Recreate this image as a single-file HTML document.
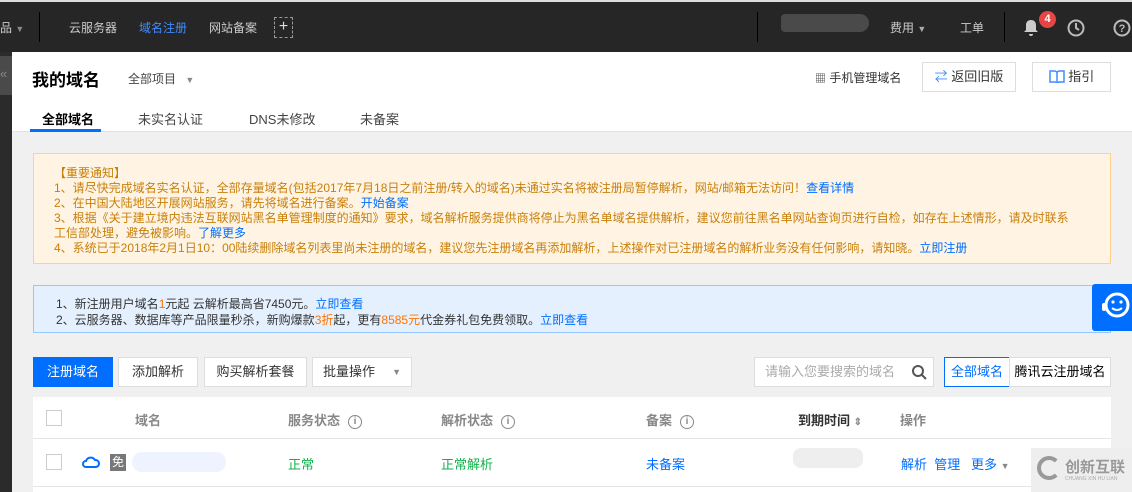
<!DOCTYPE html>
<html><head><meta charset="utf-8"><style>
*{margin:0;padding:0;box-sizing:border-box}
body{width:1132px;height:492px;overflow:hidden;background:#f0f0f0;font-family:"Liberation Sans","Noto Sans CJK SC",sans-serif;font-size:12px;color:#333;position:relative}
.a{position:absolute}
.top{left:0;top:0;width:1132px;height:52px;background:#262626;border-top:2px solid #ddd}
.top>span{position:absolute;font-size:12px;color:#ccc;top:17px}
.side{left:0;top:52px;width:12px;height:440px;background:#2b2b2b}
.hdr{left:12px;top:52px;width:1120px;height:80px;background:#fff;border-bottom:1px solid #e2e2e2}
.btn{position:absolute;background:#fff;border:1px solid #ddd;height:30px;line-height:28px;text-align:center;font-size:13px;color:#333}
.notice{left:33px;top:153px;width:1078px;height:111px;background:#fff4e3;border:1px solid #ffd18b;color:#c87f0a;font-size:12px;line-height:15px;padding:12px 0 0 20px}
.blue{color:#006eff}
.promo{left:33px;top:285px;width:1078px;height:48px;background:#e5f0ff;border:1px solid #97c7ff;color:#333;line-height:16px;padding:10px 0 0 22px}
.or{color:#ff7200}
.tbl{left:33px;top:397px;width:1078px;height:95px;background:#fff}
.th{position:absolute;top:13px;font-size:13px;color:#888;font-weight:bold}
.td{position:absolute;top:57px;font-size:13px}
.cb{position:absolute;width:16px;height:16px;border:1px solid #ccc;left:13px;background:#fff}
.i{display:inline-block;width:14px;height:14px;border:1.5px solid #888;border-radius:50%;font-size:10px;line-height:11px;text-align:center;color:#888;margin-left:8px;vertical-align:1px;font-weight:bold}
</style></head><body>
<div class="a top">
<span style="left:0">品 <small style="font-size:9px;color:#888">▼</small></span>
<div class="a" style="left:39px;top:10px;width:1px;height:30px;background:#000"></div>
<span style="left:69px">云服务器</span>
<span style="left:139px;color:#3f8cff">域名注册</span>
<span style="left:209px">网站备案</span>
<div class="a" style="left:274px;top:15px;width:19px;height:21px;border:1px dashed #999;color:#ddd;font-size:16px;line-height:17px;text-align:center">+</div>
<div class="a" style="left:757px;top:10px;width:1px;height:30px;background:#000"></div>
<div class="a" style="left:781px;top:12px;width:88px;height:18px;background:#4a4a4a;border-radius:4px 9px 9px 4px"></div>
<span style="left:890px">费用 <small style="font-size:9px;color:#aaa">▼</small></span>
<span style="left:960px">工单</span>
<div class="a" style="left:1004px;top:10px;width:1px;height:30px;background:#000"></div>
<svg class="a" style="left:1023px;top:17px" width="16" height="18" viewBox="0 0 16 18"><path d="M8 1c-3 0-5 2-5 5v5l-2 2h14l-2-2V6c0-3-2-5-5-5z M6 15a2 2 0 004 0z" fill="#ccc"/></svg>
<div class="a" style="left:1039px;top:9px;width:17px;height:17px;border-radius:50%;background:#e54545;color:#fff;font-size:11px;font-weight:bold;text-align:center;line-height:17px">4</div>
<svg class="a" style="left:1067px;top:17px" width="18" height="18" viewBox="0 0 18 18"><circle cx="9" cy="9" r="7.5" fill="none" stroke="#bbb" stroke-width="2"/><path d="M9 4v5l3 2" fill="none" stroke="#bbb" stroke-width="2"/></svg>
<svg class="a" style="left:1113px;top:17px" width="18" height="18" viewBox="0 0 18 18"><circle cx="9" cy="9" r="7.5" fill="none" stroke="#bbb" stroke-width="2"/><text x="9" y="13" font-size="11" font-weight="bold" text-anchor="middle" fill="#bbb" font-family="Liberation Sans">?</text></svg>
</div>
<div class="a side"><div class="a" style="left:0;top:4px;width:12px;height:39px;background:#4a4a4a;color:#888;font-size:13px;line-height:36px">«</div></div>
<div class="a hdr">
<div class="a" style="left:20px;top:14px;font-size:17px;font-weight:bold;color:#000">我的域名</div>
<div class="a" style="left:116px;top:18px;font-size:12px;color:#444">全部项目 <span style="font-size:9px;color:#888;margin-left:6px">▼</span></div>
<div class="a" style="left:803px;top:17px;font-size:12px;color:#333"><span style="font-size:11px">▦</span> 手机管理域名</div>
<div class="btn" style="left:910px;top:10px;width:94px;height:30px"><span style="color:#3f8cff">⇄</span> 返回旧版</div>
<div class="btn" style="left:1020px;top:10px;width:79px;height:30px"><svg width="16" height="14" viewBox="0 0 16 14" style="vertical-align:-2px"><path d="M1 2h5l2 1 2-1h5v11h-5l-2 1-2-1H1z M8 3v10" fill="none" stroke="#3f8cff" stroke-width="1.5"/></svg> 指引</div>
<div class="a" style="left:30px;top:57px;font-size:13px;font-weight:bold;color:#000">全部域名</div>
<div class="a" style="left:18px;top:77px;width:71px;height:3px;background:#006eff"></div>
<div class="a" style="left:126px;top:57px;font-size:13px;color:#444">未实名认证</div>
<div class="a" style="left:237px;top:57px;font-size:13px;color:#444">DNS未修改</div>
<div class="a" style="left:348px;top:57px;font-size:13px;color:#444">未备案</div>
</div>
<div class="a notice">【重要通知】<br>
1、请尽快完成域名实名认证，全部存量域名(包括2017年7月18日之前注册/转入的域名)未通过实名将被注册局暂停解析，网站/邮箱无法访问！<span class="blue">查看详情</span><br>
2、在中国大陆地区开展网站服务，请先将域名进行备案。<span class="blue">开始备案</span><br>
3、根据《关于建立境内违法互联网站黑名单管理制度的通知》要求，域名解析服务提供商将停止为黑名单域名提供解析，建议您前往黑名单网站查询页进行自检，如存在上述情形，请及时联系<br>工信部处理，避免被影响。<span class="blue">了解更多</span><br>
4、系统已于2018年2月1日10：00陆续删除域名列表里尚未注册的域名，建议您先注册域名再添加解析，上述操作对已注册域名的解析业务没有任何影响，请知晓。<span class="blue">立即注册</span></div>
<div class="a promo">1、新注册用户域名<span class="or">1</span>元起 云解析最高省7450元。<span class="blue">立即查看</span><br>
2、云服务器、数据库等产品限量秒杀，新购爆款<span class="or">3折</span>起，更有<span class="or">8585元</span>代金券礼包免费领取。<span class="blue">立即查看</span></div>
<div class="a" style="left:1092px;top:284px;width:40px;height:47px;background:#006eff;border-radius:3px 0 0 3px">
<svg width="40" height="47" viewBox="0 0 40 47"><circle cx="25" cy="21" r="11" fill="none" stroke="#fff" stroke-width="3"/><circle cx="21" cy="18" r="1.6" fill="#fff"/><circle cx="29" cy="18" r="1.6" fill="#fff"/><path d="M20 24q5 4 10 0" fill="none" stroke="#fff" stroke-width="2"/><rect x="10" y="19" width="4" height="8" rx="2" fill="#fff"/></svg></div>
<div class="btn" style="left:33px;top:357px;width:80px;background:#006eff;border-color:#006eff;color:#fff">注册域名</div>
<div class="btn" style="left:118px;top:357px;width:80px">添加解析</div>
<div class="btn" style="left:204px;top:357px;width:103px">购买解析套餐</div>
<div class="btn" style="left:312px;top:357px;width:100px;text-align:left;padding-left:10px">批量操作 <span style="position:absolute;right:10px;font-size:9px;color:#888">▼</span></div>
<div class="btn" style="left:754px;top:357px;width:180px;text-align:left;padding-left:10px;color:#aaa">请输入您要搜索的域名
<svg class="a" style="right:6px;top:6px" width="16" height="16" viewBox="0 0 16 16"><circle cx="7" cy="7" r="5" fill="none" stroke="#555" stroke-width="2"/><path d="M11 11l4 4" stroke="#555" stroke-width="2"/></svg></div>
<div class="btn" style="left:944px;top:357px;width:66px;border-color:#006eff;color:#006eff">全部域名</div>
<div class="btn" style="left:1009px;top:357px;width:102px;color:#000">腾讯云注册域名</div>
<div class="a tbl">
<div class="a" style="left:0;top:41px;width:1078px;height:1px;background:#e5e5e5"></div>
<div class="a" style="left:0;top:89px;width:1078px;height:1px;background:#e5e5e5"></div>
<div class="cb" style="top:13px"></div>
<div class="th" style="left:102px">域名</div>
<div class="th" style="left:255px">服务状态<span class="i">i</span></div>
<div class="th" style="left:408px">解析状态<span class="i">i</span></div>
<div class="th" style="left:613px">备案<span class="i">i</span></div>
<div class="th" style="left:765px;color:#333">到期时间 <span style="font-size:10px;color:#888">⇕</span></div>
<div class="th" style="left:867px">操作</div>
<div class="cb" style="top:57px"></div>
<svg class="a" style="left:49px;top:58px" width="18" height="14" viewBox="0 0 18 14"><path d="M4 12a3 3 0 010-6 5 5 0 019-1 3.5 3.5 0 011 7z" fill="none" stroke="#006eff" stroke-width="2"/></svg>
<div class="a" style="left:77px;top:57px;width:16px;height:17px;background:#777;color:#fff;font-size:12px;text-align:center;line-height:17px">免</div>
<div class="a" style="left:99px;top:55px;width:94px;height:20px;background:#eef3ff;border-radius:10px"></div>
<div class="td" style="left:255px;color:#12b14b">正常</div>
<div class="td" style="left:408px;color:#12b14b">正常解析</div>
<div class="td" style="left:613px;color:#006eff">未备案</div>
<div class="a" style="left:760px;top:51px;width:70px;height:20px;background:#eee;border-radius:8px"></div>
<div class="td" style="left:868px;color:#006eff">解析 &nbsp;管理 &nbsp;&nbsp;更多 <span style="font-size:9px;color:#888">▼</span></div>
</div>
<div class="a" style="left:1031px;top:448px;width:101px;height:44px;background:#eee;color:#999">
<div class="a" style="left:6px;top:8px;width:24px;height:24px;border:4px solid #999;border-radius:50%;border-right-color:transparent"></div>
<div class="a" style="left:34px;top:8px;font-size:15px;font-weight:bold;color:#999">创新互联</div>
<div class="a" style="left:34px;top:28px;font-size:5px;color:#aaa">CHUANG XIN HU LIAN</div>
</div>
</body></html>
